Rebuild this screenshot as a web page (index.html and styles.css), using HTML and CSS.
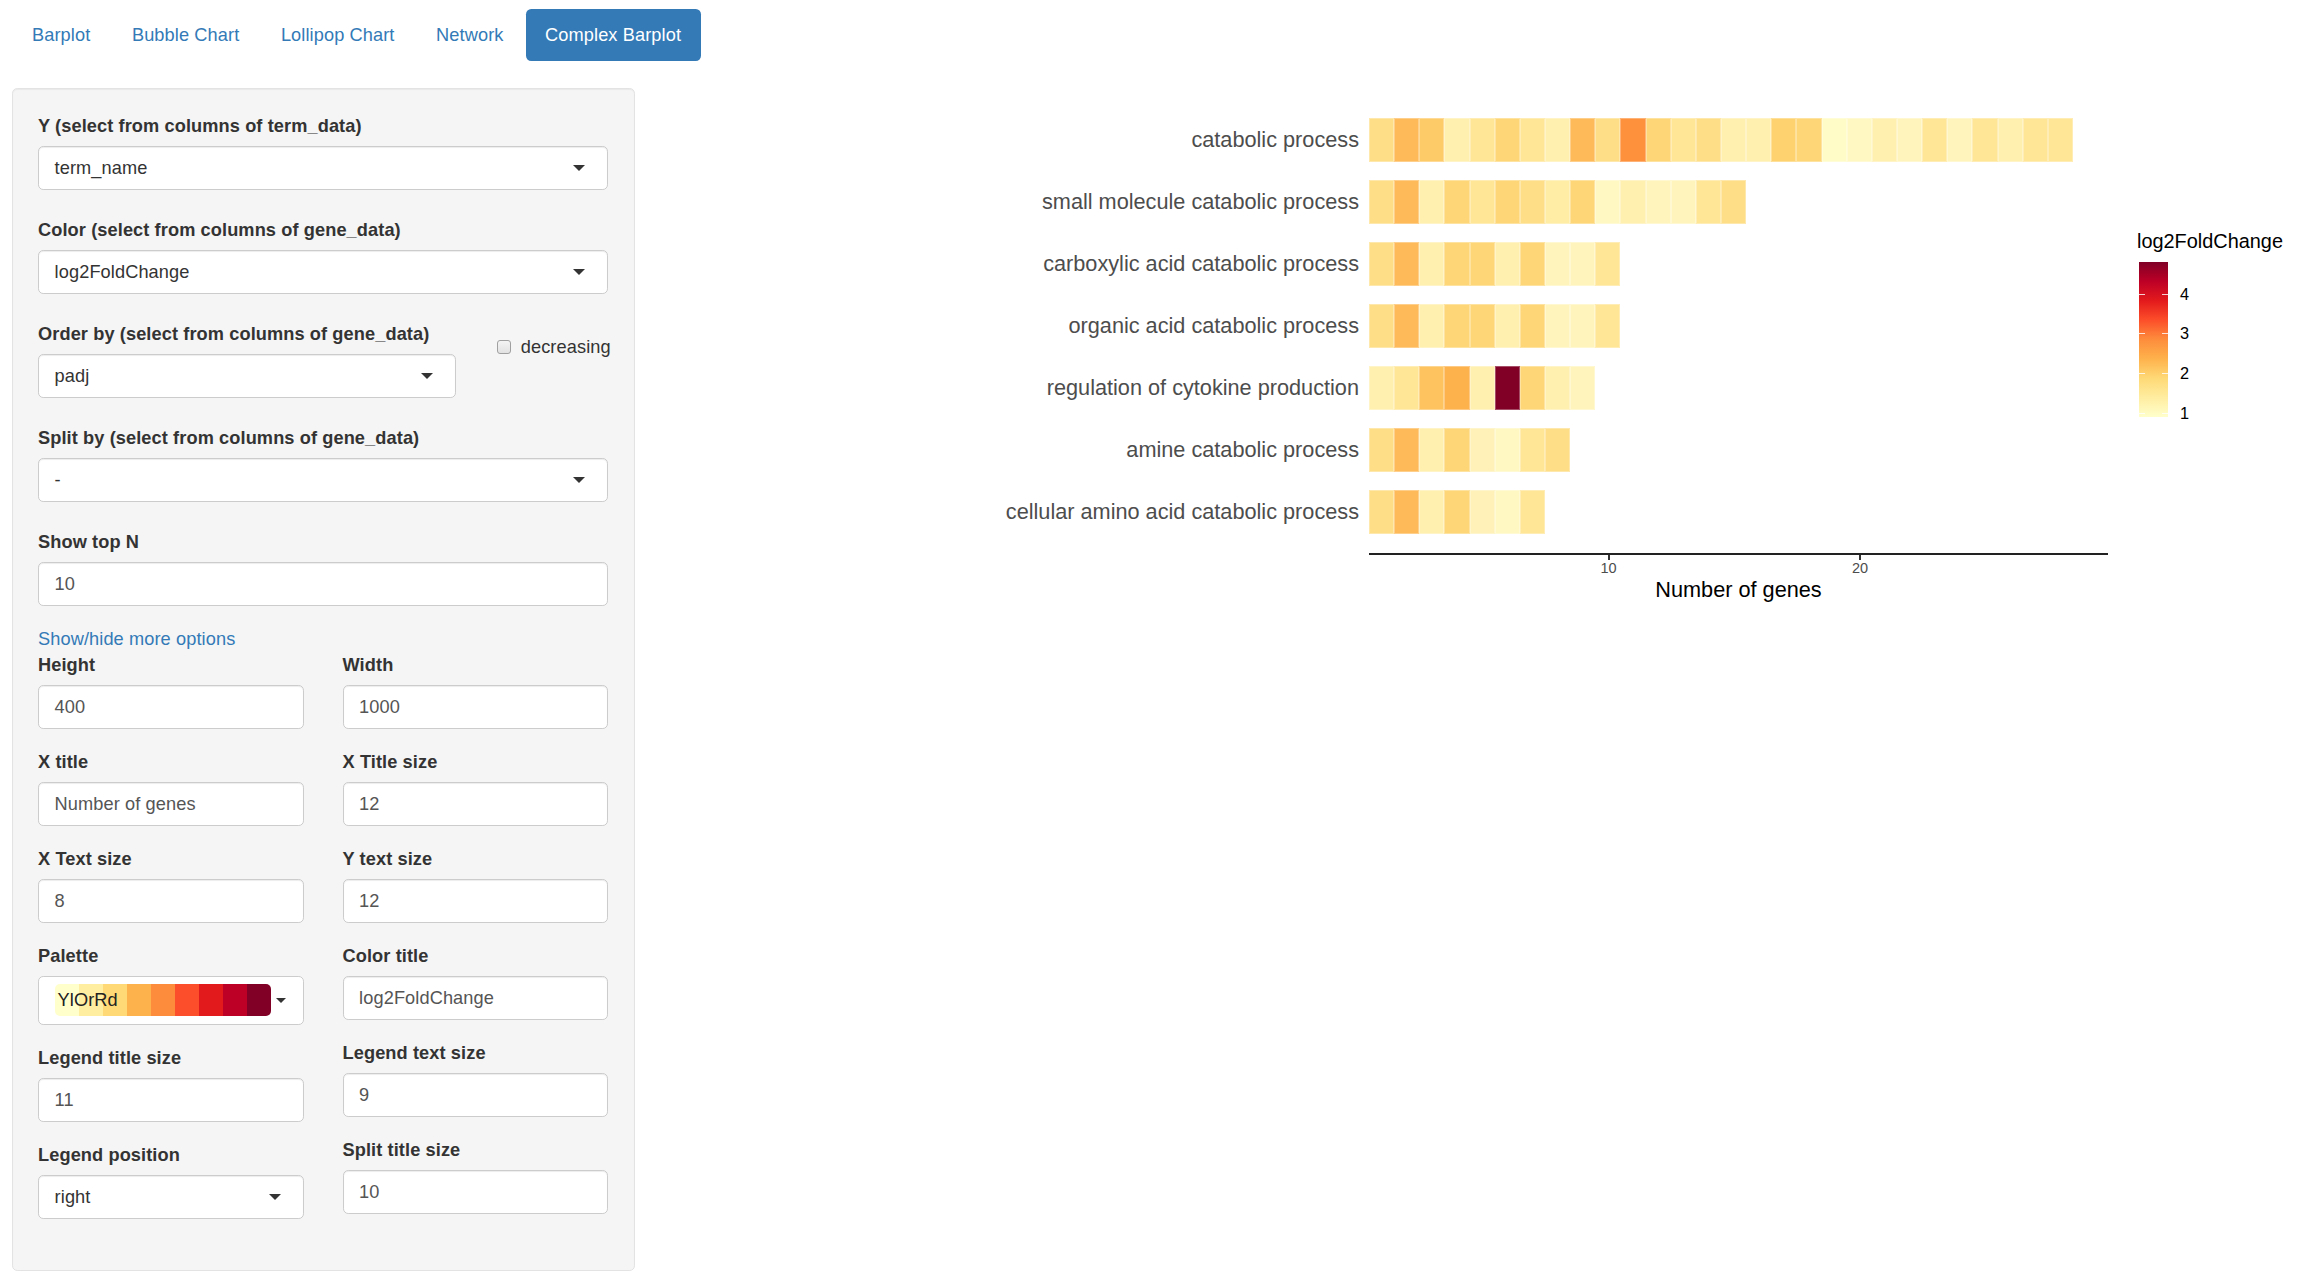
FILE: index.html
```html
<!DOCTYPE html>
<html>
<head>
<meta charset="utf-8">
<title>Complex Barplot</title>
<link rel="stylesheet" href="styles.css">
</head>
<body>
<ul class="nav">
  <li><a>Barplot</a></li>
  <li><a>Bubble Chart</a></li>
  <li><a>Lollipop Chart</a></li>
  <li><a>Network</a></li>
  <li class="active"><a>Complex Barplot</a></li>
</ul>
<div class="layout">
  <aside class="well">
    <div class="fg sel">
      <label>Y (select from columns of term_data)</label>
      <div class="select"><span>term_name</span><i class="arrow"></i></div>
    </div>
    <div class="fg sel">
      <label>Color (select from columns of gene_data)</label>
      <div class="select"><span>log2FoldChange</span><i class="arrow"></i></div>
    </div>
    <div class="row-order">
      <div class="fg sel">
        <label>Order by (select from columns of gene_data)</label>
        <div class="select"><span>padj</span><i class="arrow"></i></div>
      </div>
      <div class="checkbox"><span class="box"></span><span>decreasing</span></div>
    </div>
    <div class="fg sel">
      <label>Split by (select from columns of gene_data)</label>
      <div class="select"><span>-</span><i class="arrow"></i></div>
    </div>
    <div class="fg">
      <label>Show top N</label>
      <div class="input">10</div>
    </div>
    <a class="toggle">Show/hide more options</a>
    <div class="row2">
      <div class="col">
        <div class="fg"><label>Height</label><div class="input">400</div></div>
        <div class="fg"><label>X title</label><div class="input">Number of genes</div></div>
        <div class="fg"><label>X Text size</label><div class="input">8</div></div>
        <div class="fg">
          <label>Palette</label>
          <div class="picker">
            <div class="strip">
              <div class="swatches">
                <i class="p1"></i><i class="p2"></i><i class="p3"></i><i class="p4"></i><i class="p5"></i><i class="p6"></i><i class="p7"></i><i class="p8"></i><i class="p9"></i>
              </div>
              <span class="pname">YlOrRd</span>
            </div>
            <i class="caret"></i>
          </div>
        </div>
        <div class="fg"><label>Legend title size</label><div class="input">11</div></div>
        <div class="fg sel"><label>Legend position</label><div class="select"><span>right</span><i class="arrow"></i></div></div>
      </div>
      <div class="col">
        <div class="fg"><label>Width</label><div class="input">1000</div></div>
        <div class="fg"><label>X Title size</label><div class="input">12</div></div>
        <div class="fg"><label>Y text size</label><div class="input">12</div></div>
        <div class="fg"><label>Color title</label><div class="input">log2FoldChange</div></div>
        <div class="fg"><label>Legend text size</label><div class="input">9</div></div>
        <div class="fg"><label>Split title size</label><div class="input">10</div></div>
      </div>
    </div>
  </aside>
  <main class="main">
    <div class="plot">
      <div class="ylab">
        <div>catabolic process</div>
        <div>small molecule catabolic process</div>
        <div>carboxylic acid catabolic process</div>
        <div>organic acid catabolic process</div>
        <div>regulation of cytokine production</div>
        <div>amine catabolic process</div>
        <div>cellular amino acid catabolic process</div>
      </div>
      <div class="panel">
        <div class="bar">
          <i class="a"></i><i class="b"></i><i class="c"></i><i class="d"></i><i class="e"></i><i class="f"></i><i class="e"></i><i class="d"></i><i class="b"></i><i class="a"></i><i class="h"></i><i class="f"></i><i class="e"></i><i class="a"></i><i class="d"></i><i class="d"></i><i class="i"></i><i class="f"></i><i class="j"></i><i class="o"></i><i class="d"></i><i class="k"></i><i class="e"></i><i class="k"></i><i class="e"></i><i class="d"></i><i class="e"></i><i class="e"></i>
        </div>
        <div class="bar">
          <i class="a"></i><i class="b"></i><i class="d"></i><i class="f"></i><i class="e"></i><i class="f"></i><i class="a"></i><i class="p"></i><i class="f"></i><i class="o"></i><i class="d"></i><i class="k"></i><i class="k"></i><i class="e"></i><i class="a"></i>
        </div>
        <div class="bar">
          <i class="a"></i><i class="b"></i><i class="d"></i><i class="f"></i><i class="f"></i><i class="d"></i><i class="f"></i><i class="k"></i><i class="k"></i><i class="e"></i>
        </div>
        <div class="bar">
          <i class="a"></i><i class="b"></i><i class="d"></i><i class="f"></i><i class="f"></i><i class="d"></i><i class="f"></i><i class="k"></i><i class="k"></i><i class="e"></i>
        </div>
        <div class="bar">
          <i class="d"></i><i class="e"></i><i class="l"></i><i class="m"></i><i class="d"></i><i class="n"></i><i class="f"></i><i class="d"></i><i class="k"></i>
        </div>
        <div class="bar">
          <i class="a"></i><i class="b"></i><i class="d"></i><i class="f"></i><i class="q"></i><i class="o"></i><i class="e"></i><i class="a"></i>
        </div>
        <div class="bar">
          <i class="a"></i><i class="b"></i><i class="d"></i><i class="f"></i><i class="q"></i><i class="o"></i><i class="e"></i>
        </div>
        <div class="axis">
          <div class="tick"><i></i><span>10</span></div>
          <div class="tick"><i></i><span>20</span></div>
        </div>
        <div class="xtitle">Number of genes</div>
      </div>
      <div class="legend">
        <div class="ltitle">log2FoldChange</div>
        <div class="lbody">
          <div class="cbar">
            <i></i><i></i><i></i><i></i>
          </div>
          <div class="llabels">
            <span>4</span><span>3</span><span>2</span><span>1</span>
          </div>
        </div>
      </div>
    </div>
  </main>
</div>
</body>
</html>
```

FILE: styles.css
```css
* { box-sizing: border-box; }
html, body { margin: 0; background: #fff; }
body {
  font-family: "Liberation Sans", Arial, sans-serif;
  font-size: 18.2px;
  line-height: 26px;
  color: #333;
}

/* nav pills */
.nav {
  display: flex;
  gap: 2.6px;
  list-style: none;
  margin: 0;
  padding: 9px 0 0 12.5px;
  letter-spacing: 0.1px;
}
.nav a {
  display: block;
  padding: 13px 19.5px;
  color: #337ab7;
  border-radius: 5.2px;
  white-space: nowrap;
}
.nav .active a { background: #337ab7; color: #fff; }

.layout {
  display: flex;
  align-items: flex-start;
  margin-top: 26.5px;
}

/* sidebar well */
.well {
  flex: none;
  width: 623px;
  margin-left: 12px;
  padding: 24px 26px 24px 25px;
  background: #f5f5f5;
  border: 1px solid #e3e3e3;
  border-radius: 5.2px;
  box-shadow: inset 0 1px 1px rgba(0,0,0,.05);
  letter-spacing: 0.1px;
}
.fg { margin-bottom: 20px; }
.fg.sel { margin-bottom: 27px; }
.fg label {
  display: block;
  font-weight: bold;
  margin-bottom: 7px;
  white-space: nowrap;
}
.select, .input {
  height: 44px;
  display: flex;
  align-items: center;
  padding: 0 15.6px;
  background: #fff;
  border: 1px solid #ccc;
  border-radius: 5.2px;
  box-shadow: inset 0 1px 1px rgba(0,0,0,.075);
}
.input { color: #555; }
.select { justify-content: space-between; color: #333; }
.arrow {
  width: 0; height: 0;
  border-style: solid;
  border-width: 6.5px 6.5px 0 6.5px;
  border-color: #333 transparent transparent transparent;
  margin-right: 6px;
}

.row-order {
  display: grid;
  grid-template-columns: 417.75px 1fr;
  column-gap: 39px;
  align-items: start;
}
.checkbox {
  display: flex;
  align-items: center;
  margin-top: 13px;
  white-space: nowrap;
}
.checkbox .box {
  width: 14px; height: 14px;
  margin: 0 10px 0 2px;
  border: 1px solid #a0a0a0;
  border-radius: 3px;
  background: linear-gradient(#f4f4f4, #e2e2e2);
}

.toggle { display: block; color: #337ab7; }

.row2 {
  display: grid;
  grid-template-columns: 1fr 1fr;
  column-gap: 39px;
  align-items: start;
}

/* palette picker */
.picker {
  height: 49px;
  display: flex;
  align-items: center;
  padding: 0 15.6px;
  background: #fff;
  border: 1px solid #ccc;
  border-radius: 5.2px;
}
.strip {
  display: grid;
  width: 216px;
  height: 32px;
}
.swatches, .pname { grid-area: 1 / 1; }
.swatches {
  display: flex;
  border-radius: 5px;
  overflow: hidden;
}
.swatches i { flex: 1; }
.p1 { background: #ffffcc; }
.p2 { background: #ffeda0; }
.p3 { background: #fed976; }
.p4 { background: #feb24c; }
.p5 { background: #fd8d3c; }
.p6 { background: #fc4e2a; }
.p7 { background: #e31a1c; }
.p8 { background: #bd0026; }
.p9 { background: #800026; }
.pname {
  align-self: center;
  padding-left: 3px;
  color: #222;
}
.caret {
  width: 0; height: 0;
  margin-left: 5.5px;
  border-style: solid;
  border-width: 5.5px 5.2px 0 5.2px;
  border-color: #333 transparent transparent transparent;
}

/* plot */
.main { flex: 1; padding-top: 21px; }
.plot {
  display: grid;
  grid-template-columns: 724px 739px 1fr;
  column-gap: 10px;
  align-items: start;
}
.ylab > div {
  height: 62px;
  display: flex;
  align-items: center;
  justify-content: flex-end;
  font-size: 21.7px;
  color: #4d4d4d;
  white-space: nowrap;
}
.bar {
  height: 62px;
  display: flex;
  align-items: center;
}
.bar i {
  flex: none;
  width: 25.15px;
  height: 44px;
  box-shadow: inset 0 0 0 1px rgba(255,255,255,.3);
}
.bar .a { background: #fedf88; }
.bar .b { background: #feba58; }
.bar .c { background: #fecb69; }
.bar .d { background: #fff0b0; }
.bar .e { background: #ffe696; }
.bar .f { background: #fed677; }
.bar .h { background: #fe913c; }
.bar .i { background: #fed36f; }
.bar .j { background: #fffcc8; }
.bar .k { background: #fff5bc; }
.bar .l { background: #fec35f; }
.bar .m { background: #feb24c; }
.bar .n { background: #800026; }
.bar .o { background: #fff8c2; }
.bar .p { background: #ffeda6; }
.bar .q { background: #fff1b8; }

.axis {
  margin-top: 10.5px;
  border-top: 2px solid #222;
  display: flex;
  padding-left: 219.5px;
  gap: 211.5px;
}
.tick {
  width: 40px;
  display: flex;
  flex-direction: column;
  align-items: center;
}
.tick i {
  width: 2px;
  height: 5px;
  background: #333;
}
.tick span {
  font-size: 14.5px;
  line-height: 17px;
  color: #4d4d4d;
}
.xtitle {
  text-align: center;
  font-size: 21.7px;
  line-height: 25px;
  color: #000;
}

/* legend */
.legend { padding: 120.5px 0 0 19px; }
.ltitle {
  font-size: 19.9px;
  line-height: 24px;
  color: #000;
  white-space: nowrap;
}
.lbody {
  display: flex;
  margin-top: 9px;
}
.cbar {
  width: 29px;
  height: 155px;
  margin-left: 2px;
  display: flex;
  flex-direction: column;
  padding-top: 31.5px;
  gap: 38.7px;
  background: linear-gradient(to top, #ffffcc, #ffeda0, #fed976, #feb24c, #fd8d3c, #fc4e2a, #e31a1c, #bd0026, #800026);
}
.cbar i {
  height: 1px;
  background: linear-gradient(to right, rgba(255,255,255,.8) 0 6px, transparent 6px 23px, rgba(255,255,255,.8) 23px);
}
.llabels {
  display: flex;
  flex-direction: column;
  padding-top: 22.5px;
  gap: 20.7px;
  margin-left: 12px;
}
.llabels span {
  font-size: 16.3px;
  line-height: 19px;
  color: #000;
}
```
